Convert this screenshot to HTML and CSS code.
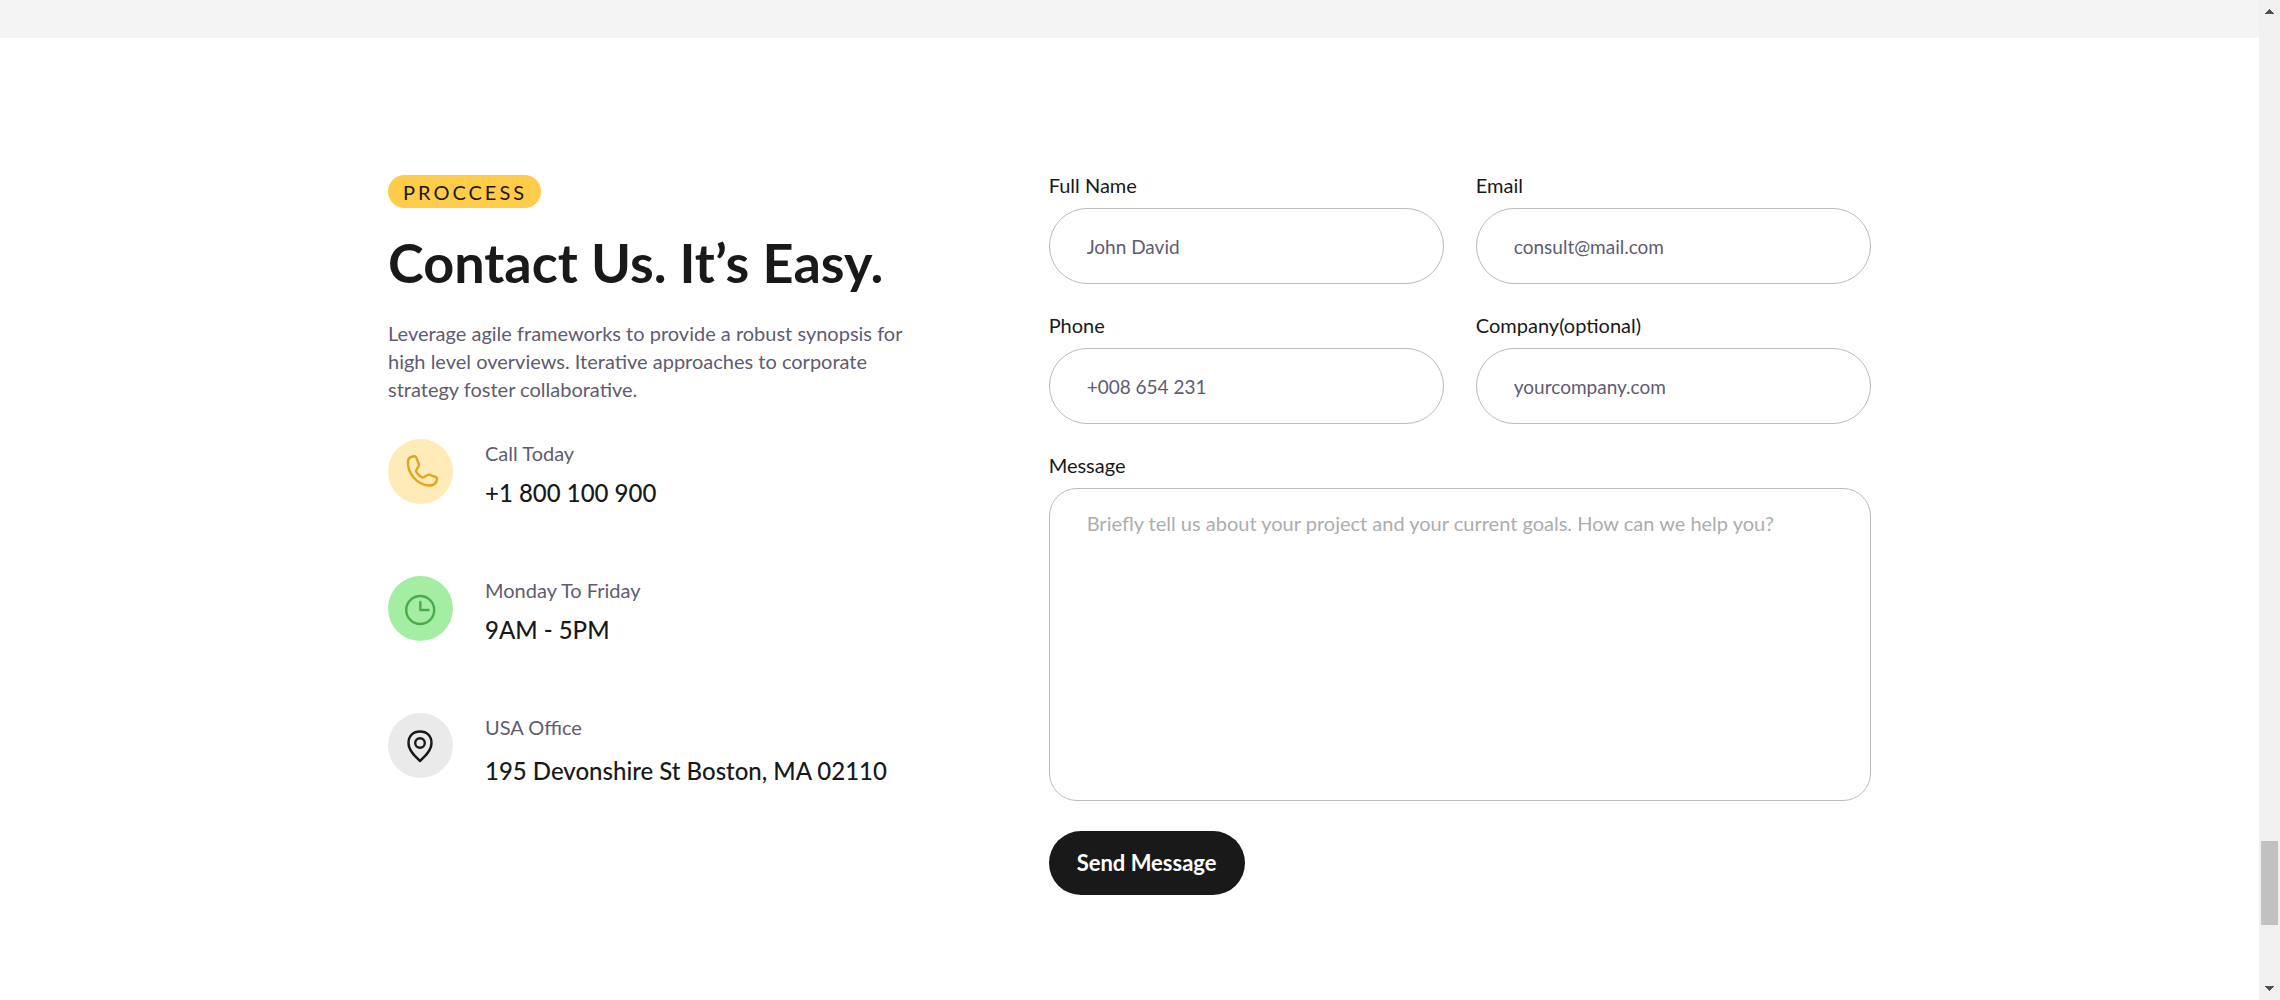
FILE: index.html
```html
<!DOCTYPE html>
<html lang="en">
<head>
<meta charset="utf-8">
<title>Contact Us</title>
<link rel="stylesheet" href="styles.css">
</head>
<body>
<div class="page">
  <div class="band"></div>
  <main class="contact">
    <section class="info">
      <span class="badge">PROCCESS</span>
      <h1 class="title">Contact Us. It’s Easy.</h1>
      <p class="lead">Leverage agile frameworks to provide a robust synopsis for high level overviews. Iterative approaches to corporate strategy foster collaborative.</p>
      <ul class="details">
        <li class="detail">
          <span class="icon icon-phone">
            <svg viewBox="0 0 65 65" width="65" height="65" aria-hidden="true"><path d="M20 22.500C20 19 23.500 17.500 26 17.200C27.500 17 28 18 28.500 19L31 25.500C31.500 27.500 28 30 28 32C28 34 33 38.500 35 38.500C37 38.500 39 35.300 41 35.600L47.500 37.800C49 38.500 49.300 40 48.800 41.500C47.500 45 45 46.800 41 46.500C29 46 19.500 34.500 20 22.500Z"/></svg>
          </span>
          <div><p class="detail-label">Call Today</p><p class="detail-value">+1 800 100 900</p></div>
        </li>
        <li class="detail">
          <span class="icon icon-clock">
            <svg viewBox="0 0 65 65" width="65" height="65" aria-hidden="true"><circle cx="32.200" cy="34" r="14"/><path d="M32.300 26V34H40.500"/></svg>
          </span>
          <div><p class="detail-label">Monday To Friday</p><p class="detail-value">9AM - 5PM</p></div>
        </li>
        <li class="detail">
          <span class="icon icon-pin">
            <svg viewBox="0 0 65 65" width="65" height="65" aria-hidden="true"><path d="M32 48C27 43.500 20.500 37.500 20.500 30C20.500 23 25 18.500 32 18.500S43.500 23 43.500 30C43.500 37.500 37 43.500 32 48Z"/><circle cx="32" cy="30" r="4.800"/></svg>
          </span>
          <div><p class="detail-label">USA Office</p><p class="detail-value detail-address">195 Devonshire St Boston, MA 02110</p></div>
        </li>
      </ul>
    </section>
    <form class="form">
      <div class="field"><label for="name">Full Name</label><input id="name" type="text" placeholder="John David"></div>
      <div class="field"><label for="email">Email</label><input id="email" type="email" placeholder="consult@mail.com"></div>
      <div class="field"><label for="phone">Phone</label><input id="phone" type="tel" placeholder="+008 654 231"></div>
      <div class="field"><label for="company">Company(optional)</label><input id="company" type="text" placeholder="yourcompany.com"></div>
      <div class="field field-wide"><label for="message">Message</label><textarea id="message" placeholder="Briefly tell us about your project and your current goals. How can we help you?"></textarea></div>
      <button class="submit" type="submit">Send Message</button>
    </form>
  </main>
</div>
<div class="scrollbar" aria-hidden="true">
  <svg class="arrow" viewBox="0 0 9 5" width="9" height="5"><path d="M4 0h1v1h1v1h1v1h1v1h1v1H0V4h1V3h1V2h1V1h1z"/></svg>
  <span class="thumb"></span>
  <svg class="arrow" viewBox="0 0 9 5" width="9" height="5"><path d="M0 0h9v1H8v1H7v1H6v1H5v1H4V4H3V3H2V2H1V1H0z"/></svg>
</div>
</body>
</html>
```

FILE: styles.css
```css
* {
  box-sizing: border-box;
}

body {
  display: grid;
  grid-template-columns: minmax(0, 1fr) 21px;
  min-height: 100vh;
  margin: 0;
  background: #fff;
  color: #191919;
  font: 20px/28px Lato, "Open Sans", sans-serif;
}

h1,
p,
ul {
  margin: 0;
  padding: 0;
}

.band {
  height: 38px;
  background: #f4f4f4;
}

.contact {
  display: grid;
  grid-template-columns: minmax(0, 9fr) minmax(0, 14fr);
  gap: 132px;
  align-items: start;
  max-width: 1483px;
  margin: 0 auto;
  padding: 137px 0 96px;
}

.badge {
  display: block;
  width: fit-content;
  padding: 3px 14px 2px 15px;
  border-radius: 17px;
  background: #ffcc4a;
  letter-spacing: 3px;
}

.title {
  margin: 23px 0 24px;
  font-size: 54px;
  line-height: 64px;
  font-weight: 700;
  white-space: nowrap;
}

.lead,
.detail-label {
  color: #5f5b70;
}

.details {
  display: grid;
  gap: 72px;
  margin-top: 36px;
  list-style: none;
}

.detail {
  display: flex;
  gap: 32px;
  height: 65px;
}

.icon {
  flex: none;
  width: 65px;
  height: 65px;
  border-radius: 50%;
}

.icon svg {
  display: block;
  fill: none;
  stroke-width: 2.4;
  stroke-linecap: round;
  stroke-linejoin: round;
}

.icon-phone {
  background: #ffebb8;
  stroke: #dea620;
}

.icon-clock {
  background: #a4eea4;
  stroke: #4bab4b;
}

.icon-pin {
  background: #eaeaea;
  stroke: #191919;
}

.detail-value {
  margin-top: 10px;
  font-size: 24px;
  line-height: 32px;
  font-weight: 500;
  white-space: nowrap;
}

.detail-address {
  margin-top: 14px;
}

.form {
  display: grid;
  grid-template-columns: repeat(2, minmax(0, 1fr));
  gap: 27px 32px;
  margin-top: -4px;
}

.field {
  display: flex;
  flex-direction: column;
  gap: 9px;
}

.field-wide {
  grid-column: 1 / -1;
}

input,
textarea {
  width: 100%;
  border: 1px solid #bbb;
  background: transparent;
  color: inherit;
  font: inherit;
}

input {
  height: 76px;
  padding: 0 37px;
  border-radius: 38px;
  font-size: 19px;
}

textarea {
  display: block;
  height: 313px;
  padding: 20px 37px;
  border-radius: 28px;
  resize: none;
}

input::placeholder {
  color: #5f5b70;
}

textarea::placeholder {
  color: #adadad;
}

.submit {
  justify-self: start;
  height: 64px;
  margin-top: 3px;
  padding: 0 28px;
  border: 0;
  border-radius: 32px;
  background: #191919;
  color: #fff;
  font: 700 22px/28px Lato, "Open Sans", sans-serif;
}

.scrollbar {
  display: grid;
  grid-template-rows: auto 1fr auto;
  justify-items: center;
  padding: 9px 2px;
  background: #f0f0f0;
}

.arrow {
  display: block;
  fill: #505050;
}

.thumb {
  align-self: end;
  width: 100%;
  height: 84px;
  margin-bottom: 61px;
  background: #c1c1c1;
}
```
